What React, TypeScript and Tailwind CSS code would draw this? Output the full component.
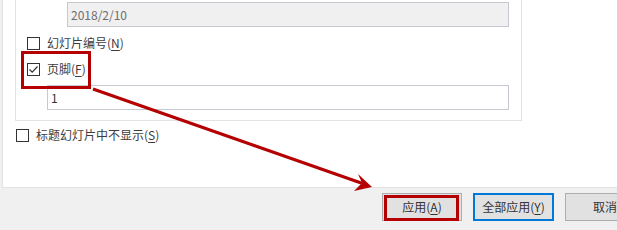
import React from "react";

const font = { fontFamily: '"Noto Sans CJK SC", "Microsoft YaHei", sans-serif' };

function Box({ checked = false }: { checked?: boolean }) {
  return (
    <div className="w-[13px] h-[13px] border border-[#333333] bg-white flex items-center justify-center shrink-0">
      {checked && (
        <svg width="11" height="11" viewBox="0 0 11 11">
          <path d="M1.5 5.5 L4.2 8.2 L9.5 2.5" fill="none" stroke="#333333" strokeWidth="1.2" />
        </svg>
      )}
    </div>
  );
}

function Check({ label, mn, checked }: { label: string; mn: string; checked?: boolean }) {
  return (
    <div className="flex items-center gap-[7px] h-[14px]">
      <Box checked={checked} />
      <span className="text-[12px] leading-none text-[#3c3c3c] whitespace-nowrap">
        {label}(<span className="underline underline-offset-2">{mn}</span>)
      </span>
    </div>
  );
}

export default function App() {
  return (
    <div className="relative w-[617px] h-[230px] bg-[#f0f0f0] overflow-hidden" style={font}>
      <div className="ml-[2px] h-[188px] bg-white border-l border-b border-[#e3e3e3]">
        <div className="ml-[12px] w-[507px] h-[121px] border-l border-r border-b border-[#e3e3e3] flex flex-col">
          <div className="mt-[2px] ml-[51px] w-[442px] h-[25px] bg-[#f0f0f0] border border-[#c8c8d0] flex items-center pl-[3px] text-[12px] text-[#6d6d6d]">
            2018/2/10
          </div>
          <div className="mt-[9px] ml-[11px]">
            <Check label="幻灯片编号" mn="N" />
          </div>
          <div className="mt-[12px] ml-[11px]">
            <Check label="页脚" mn="F" checked />
          </div>
          <div className="mt-[9px] ml-[31px] w-[462px] h-[25px] bg-white border border-[#c8c8d0] flex items-center pl-[3px] text-[12px] text-[#333333]">
            1
          </div>
        </div>
        <div className="mt-[7px] ml-[13px]">
          <Check label="标题幻灯片中不显示" mn="S" />
        </div>
      </div>
      <div className="flex items-start gap-[11px] pl-[382px] pt-[5px]">
        <div className="w-[80px] h-[28px] shrink-0 bg-[#e1e1e1] border border-[#adadad] flex items-center justify-center text-[12px] text-[#333333]">
          应用(<span className="underline underline-offset-2">A</span>)
        </div>
        <div className="w-[81px] h-[28px] shrink-0 bg-[#e1e1e1] border-2 border-[#0078d7] flex items-center justify-center text-[12px] text-[#333333]">
          全部应用(<span className="underline underline-offset-2">Y</span>)
        </div>
        <div className="w-[80px] h-[28px] shrink-0 bg-[#e1e1e1] border border-[#adadad] flex items-center justify-center text-[12px] text-[#333333]">
          取消
        </div>
      </div>
      <div className="absolute left-[21px] top-[51px] w-[70px] h-[38px] border-[3px] border-[#b40000]" />
      <div className="absolute left-[384px] top-[195px] w-[75px] h-[26px] border-[3px] border-[#b40000]" />
      <svg className="absolute left-0 top-0" width="617" height="230">
        <line x1="93" y1="89" x2="364" y2="184" stroke="#b40000" strokeWidth="3" />
        <polygon points="372,187 358,174 362,183 354,191" fill="#b40000" />
      </svg>
    </div>
  );
}
